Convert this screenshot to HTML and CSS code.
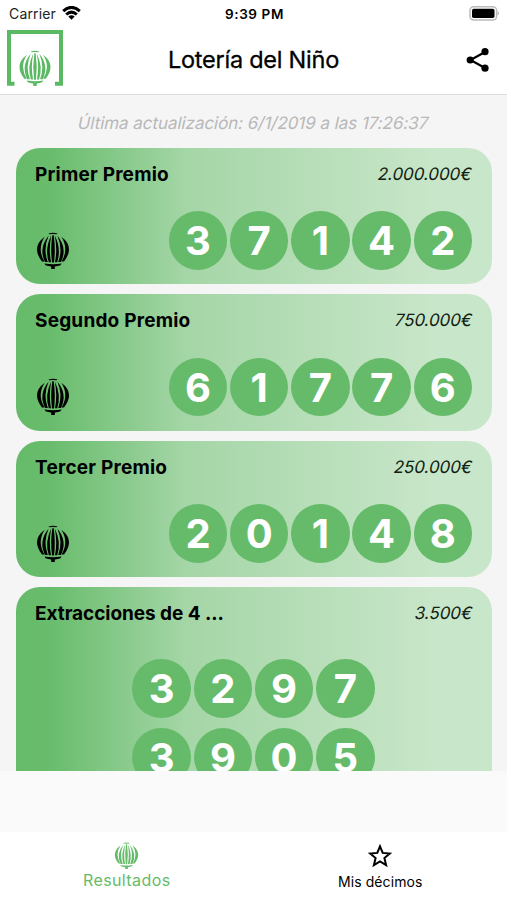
FILE: index.html
```html
<!DOCTYPE html>
<html lang="es">
<head>
<meta charset="utf-8">
<title>Lotería del Niño</title>
<link rel="stylesheet" href="styles.css">
</head>
<body>
<svg class="defs" width="0" height="0" aria-hidden="true">
  <symbol id="balloon" viewBox="0 0 34 37">
    <path d="M12.500 1.500Q17 0 21.500 1.500L20.500 2.300Q17 1.500 13.500 2.300Z"/>
    <path d="M8.700 4.800Q-5.200 15 6 29.500H8.500Q.8 17 8.700 4.800Z"/>
    <path d="M12.600 3.800Q2.250 16 9 30H11.800Q6.800 17 12.600 3.800Z"/>
    <path d="M15.200 3.500Q8.500 17 12.800 30.300H15Q12.500 17 15.200 3.500Z"/>
    <path d="M16.300 3.200H17.700Q19.700 17 18 30.500H16Q14.300 17 16.300 3.200Z"/>
    <path d="M18.800 3.500Q25.500 17 21.200 30.300H19Q21.500 17 18.800 3.500Z"/>
    <path d="M21.400 3.800Q31.750 16 25 30H22.200Q27.200 17 21.400 3.800Z"/>
    <path d="M25.300 4.800Q39.200 15 28 29.500H25.500Q33.200 17 25.300 4.800Z"/>
    <path d="M8.500 31.500Q17 33 25.500 31.500L24.500 33.300Q22 34.300 18.800 34.500V37H15.200V34.500Q12 34.300 9.500 33.300Z"/>
  </symbol>
</svg>
<div class="screen">
  <div class="status">
    <span class="carrier">Carrier
      <svg class="wifi" width="19" height="14" viewBox="0 0 19 14" fill="none" stroke="#000" stroke-width="3"><path d="M1.200 5.200Q9.500-2.400 17.800 5.200M4.200 8.500Q9.500 3.800 14.800 8.500"/><path d="M9.500 13.700L6.300 10.600Q9.500 8 12.700 10.600Z" fill="#000" stroke="none"/></svg>
    </span>
    <span class="clock">9:39 PM</span>
    <svg class="battery" width="31" height="15" viewBox="0 0 31 15"><rect x="1" y=".7" width="26.600" height="13.200" rx="3.600" fill="#fff" stroke="#bbb" stroke-width="1.500"/><rect x="3" y="2.700" width="22.500" height="9.300" rx="1.800"/><path d="M28.700 5Q31 7.300 28.700 9.600Z" fill="#aaa"/></svg>
  </div>
  <header class="header">
    <svg class="logo" width="56" height="56" viewBox="0 0 56 56"><path d="M7.500 53.700H2V2H54V53.700H48" fill="none" stroke="#5cb963" stroke-width="4"/><use href="#balloon" x="11.500" y="20" width="33" height="36"/></svg>
    <h1>Lotería del Niño</h1>
    <svg class="share" width="24" height="26" viewBox="0 0 24 26"><path d="M19 5L4.500 13L19 21" fill="none" stroke="#000" stroke-width="2.200"/><circle cx="19" cy="4.700" r="3.600"/><circle cx="4.200" cy="13" r="3.600"/><circle cx="19" cy="21.200" r="3.600"/></svg>
  </header>
  <main class="results">
    <p class="updated"><span class="slant">Última actualización: 6/1/2019 a las 17:26:37</span></p>
    <section class="card">
      <div class="top"><h2>Primer Premio</h2><span class="prize slant">2.000.000€</span></div>
      <div class="draw"><svg class="mark"><use href="#balloon"/></svg><div class="balls"><b>3</b><b>7</b><b>1</b><b>4</b><b>2</b></div></div>
    </section>
    <section class="card">
      <div class="top"><h2>Segundo Premio</h2><span class="prize slant">750.000€</span></div>
      <div class="draw"><svg class="mark"><use href="#balloon"/></svg><div class="balls"><b>6</b><b>1</b><b>7</b><b>7</b><b>6</b></div></div>
    </section>
    <section class="card">
      <div class="top"><h2>Tercer Premio</h2><span class="prize slant">250.000€</span></div>
      <div class="draw"><svg class="mark"><use href="#balloon"/></svg><div class="balls"><b>2</b><b>0</b><b>1</b><b>4</b><b>8</b></div></div>
    </section>
    <section class="card card-multi">
      <div class="top"><h2 class="long">Extracciones de 4 ...</h2><span class="prize slant">3.500€</span></div>
      <div class="rows">
        <div class="balls"><b>3</b><b>2</b><b>9</b><b>7</b></div>
        <div class="balls"><b>3</b><b>9</b><b>0</b><b>5</b></div>
      </div>
    </section>
  </main>
  <div class="banner"></div>
  <nav class="tabs">
    <a class="tab active"><svg class="tab-balloon"><use href="#balloon"/></svg><span>Resultados</span></a>
    <a class="tab"><svg class="star" width="24" height="24" viewBox="0 0 24 24"><path d="M12 2.300L14.700 8.900L21.800 9.500L16.400 14.100L18.100 21.100L12 17.400L5.900 21.100L7.600 14.100L2.200 9.500L9.300 8.900Z" fill="none" stroke="#000" stroke-width="2"/></svg><span>Mis décimos</span></a>
  </nav>
</div>
</body>
</html>
```
FILE: styles.css
```css
* { box-sizing: border-box; }
body { margin: 0; font-family: Inter, "Liberation Sans", sans-serif; color: #000; }
h1, h2, p { margin: 0; }
svg { display: block; flex: none; }
.defs { position: absolute; }
.screen { width: 507px; height: 900px; display: flex; flex-direction: column; overflow: hidden; background: #fff; }
.status { height: 28px; flex: none; display: grid; grid-template-columns: 1fr auto 1fr; align-items: center; padding: 0 7px 1px 9px; font-size: 14px; }
.carrier { display: flex; align-items: center; gap: 6px; color: #222; letter-spacing: .15px; }
.wifi { margin-top: -2px; }
.clock { font-weight: 600; font-size: 13.500px; letter-spacing: .6px; }
.battery { justify-self: end; }
.header { height: 67px; flex: none; display: grid; grid-template-columns: 56px 1fr 56px; align-items: start; padding: 2px 17px 0 7px; border-bottom: 1px solid #dcdcdc; }
.logo { fill: #5cb963; }
.header h1 { font-size: 23.500px; line-height: 30px; font-weight: 400; letter-spacing: -.25px; -webkit-text-stroke: .3px #000; text-align: center; padding: 15px 0 0 10px; white-space: nowrap; }
.share { justify-self: end; margin-top: 17px; }
.results { height: 676px; flex: none; overflow: hidden; background: #f5f5f5; padding: 0 15px 0 15.500px; }
.updated { height: 52.500px; padding-top: 17px; font-size: 17px; line-height: 22px; color: #b8b8b8; text-align: center; white-space: nowrap; }
.slant { display: inline-block; transform: skewX(-12deg); }
.card { height: 136.500px; margin-bottom: 10.100px; border-radius: 24px; padding: 14px 20px 0 19.500px; background: linear-gradient(90deg, #66bb6a 0%, #68bc6c 7%, #a5d6a7 36%, #c8e6c9 88%, #c8e6c9 100%); }
.top { display: flex; justify-content: space-between; line-height: 24px; }
.card h2 { font-size: 19px; font-weight: 700; line-height: 25px; letter-spacing: .2px; }
.card h2.long { letter-spacing: -.05px; }
.prize { font-size: 17px; letter-spacing: -.1px; color: #112011; }
.updated .slant { letter-spacing: -.05px; }
.draw { display: flex; justify-content: space-between; align-items: flex-end; margin-top: 24.500px; }
.mark { width: 34px; height: 37px; margin: 0 0 1px 1px; }
.balls { display: flex; gap: 2.700px; }
.balls b { width: 58.500px; height: 58.500px; border-radius: 50%; background: #66bb6a; color: #fff; font-size: 40px; font-weight: 700; line-height: 59px; text-align: center; }
.card-multi { height: 260px; }
.rows { display: flex; flex-direction: column; align-items: center; gap: 10px; margin-top: 33px; }
.banner { height: 61px; flex: none; background: #fafafa; }
.tabs { flex: 1; display: grid; grid-template-columns: 1fr 1fr; background: #fff; }
.tab { display: flex; flex-direction: column; align-items: center; font-size: 14px; line-height: 18px; letter-spacing: .1px; }
.active { color: #66bb6a; fill: #66bb6a; font-size: 16px; letter-spacing: .4px; }
.tab-balloon { width: 25px; height: 27px; margin: 10px 0 2px; }
.star { margin: 12px 0 5px; }
```
